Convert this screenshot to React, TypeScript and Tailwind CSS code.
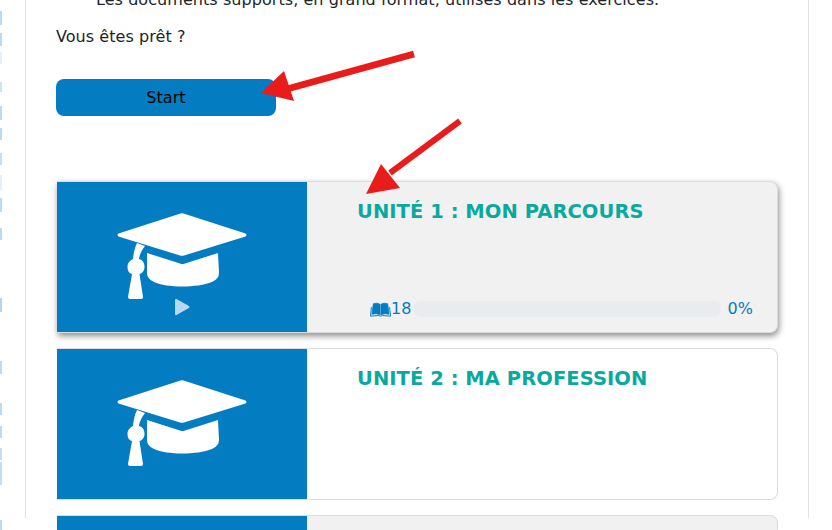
const marks = [
  [11, 14, 0.8], [33, 13, 0.8], [52, 12, 0.3], [82, 10, 0.6], [106, 14, 0.8], [128, 12, 0.8], [153, 12, 0.7],
  [175, 15, 0.3], [198, 14, 0.8], [228, 12, 0.8], [298, 14, 0.9], [361, 13, 0.8], [403, 12, 0.8], [426, 12, 0.8],
  [448, 12, 0.7], [462, 23, 0.7], [520, 10, 0.8],
];

const Cap = () => (
  <svg viewBox="0 0 130 88" className="h-[88px] w-[130px]" fill="#fff">
    <path d="M63.500 0.500 Q65 0 66.500 0.500 L128.500 20.500 Q130.500 22 128.500 23.500 L67 42.500 Q65 43 63 42.500 L1.500 23.500 Q-0.500 22 1.500 20.500 Z" />
    <path d="M30 40 L63 50.500 Q65.500 51.500 68 50.500 L101 40 L102 60 Q102 66 95 69 C80 75 50 75 37 69 Q30 66 30 60 Z" />
    <path d="M20 30 L28 33 C24 38 22 44 22 46 C26 47 27.500 50 27.500 54 C27.500 58 25 60.500 22.500 61 L26 84 Q26 86 24 86 L13 86 Q11 86 11 84 L15 61 C12 60.500 10.500 58 10.500 54 C10.500 50 13 47.500 16 46 C16.500 40 18 34 20 30 Z" />
  </svg>
);

const Book = () => (
  <svg viewBox="0 0 22 15" className="h-[15px] w-[21px] shrink-0">
    <path d="M2 12.500 L3.500 1.500 Q7.500 0 10.500 2 L10.500 13 Q6.500 11 2 12.500 Z" fill="#047cc2" stroke="#047cc2" strokeWidth="0.8" />
    <path d="M20 12.500 L18.500 1.500 Q14.500 0 11.500 2 L11.500 13 Q15.500 11 20 12.500 Z" fill="#047cc2" stroke="#047cc2" strokeWidth="0.8" />
    <path d="M0.500 14.500 L1.500 5 M21.500 14.500 L20.500 5 M0.500 14.500 L9 13.800 L11 14.500 L13 13.800 L21.500 14.500" fill="none" stroke="#047cc2" />
  </svg>
);

const Unit = ({ title, active, gray, progress }: { title: string; active?: boolean; gray?: boolean; progress?: boolean }) => (
  <div className={`ml-px flex h-[152px] shrink-0 rounded-lg rounded-l-none border border-l-0 border-[#dcdcdc] ${gray || active ? "bg-[#f1f1f1]" : "bg-white"} ${active ? "shadow-[1px_3px_6px_rgba(0,0,0,0.45)]" : ""}`}>
    <div className="relative flex w-[250px] shrink-0 justify-center bg-[#047cc2] pt-[31px]">
      <Cap />
      {active && (
        <svg viewBox="0 0 16 18" className="absolute left-[117px] top-[116px] h-[18px] w-[16px]">
          <path d="M1 2 Q1 0.500 2.500 1 L15 8 Q16 9 15 10 L2.500 17 Q1 17.500 1 16 Z" fill="#b8d8ee" />
        </svg>
      )}
    </div>
    <div className="relative flex-1">
      <h2 className="ml-[50px] mt-[18px] text-[19.5px] leading-[24px] font-bold text-[#0aa9a0]">{title}</h2>
      {progress && (
        <div className="absolute bottom-[13px] left-[63px] right-[24px] flex h-[20px] items-center text-[16px] tracking-[0.1px] text-[#047cc2]">
          <Book />
          <span>18</span>
          <div className="mx-[1px] h-[16px] flex-1 rounded-full bg-[#e9ecef]" />
          <span className="ml-[5px]">0%</span>
        </div>
      )}
    </div>
  </div>
);

export default function App() {
  return (
    <div className="relative h-[530px] w-[832px] overflow-hidden bg-white font-['DejaVu_Sans','Verdana',sans-serif] text-[16px] tracking-[0.06px] text-[#212529]">
      <svg className="absolute left-0 top-0 h-[530px] w-[3px] blur-[0.5px]" viewBox="0 0 3 530">
        {marks.map(([y, h, o]) => (
          <rect key={y} x="0" y={y} width="2" height={h} fill="#a9d2ec" opacity={o} />
        ))}
      </svg>
      <div className="ml-[25px] h-[530px] w-[784px] border-x border-[#dee2e6] px-[30px]">
        <p className="-mt-[12px] pl-[40px] leading-[24px] whitespace-nowrap">Les documents supports, en grand format, utilisés dans les exercices.</p>
        <p className="mt-[13px] leading-[24px]">Vous êtes prêt ?</p>
        <button className="mt-[30px] block h-[37px] w-[220px] rounded-lg bg-[#047cc2] text-[16px] text-black">Start</button>
        <div className="mt-[65px] flex flex-col gap-[15px]">
          <Unit title="UNITÉ 1 : MON PARCOURS" active progress />
          <Unit title="UNITÉ 2 : MA PROFESSION" />
          <Unit title="" gray />
        </div>
      </div>
      <svg className="pointer-events-none absolute left-0 top-0 h-[530px] w-[832px]" viewBox="0 0 832 530">
        <path d="M414 54 L287 89" stroke="#e91c1c" strokeWidth="7" fill="none" />
        <path d="M261 93 L284 71 L294 101 Z" fill="#e91c1c" />
        <path d="M460 121 L390 173" stroke="#e91c1c" strokeWidth="6" fill="none" />
        <path d="M366 194 L381 164 L400 188 Z" fill="#e91c1c" />
      </svg>
    </div>
  );
}
